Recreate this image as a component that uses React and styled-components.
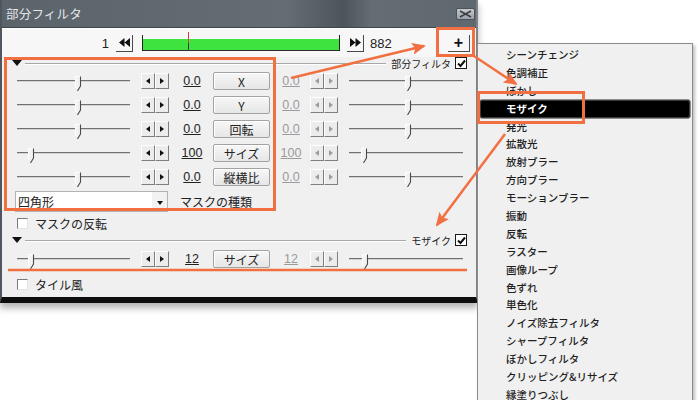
import React from 'react';
import styled, { createGlobalStyle } from 'styled-components';

const ORANGE = '#f26f42';
const JP = `"Noto Sans CJK JP", "Noto Sans", sans-serif`;
const NUM = `"Liberation Sans", "Noto Sans CJK JP", sans-serif`;

const Global = createGlobalStyle`
  html, body { margin: 0; padding: 0; background: #fff; }
  body { font-family: ${JP}; color: #1e1e1e; }
`;

const Stage = styled.div`
  position: relative;
  width: 700px;
  height: 400px;
  overflow: hidden;
  display: flex;
  align-items: flex-start;
  background: #fff;
`;

const Win = styled.div`
  position: relative;
  z-index: 1;
  flex: none;
  width: 478px;
  box-sizing: border-box;
  display: flex;
  flex-direction: column;
  background: #f0f0f0;
  border-left: 2px solid #4f565d;
  border-right: 2px solid #7d848b;
  border-bottom: 6px solid #0e0e0e;
  box-shadow: 0 5px 7px rgba(0, 0, 0, 0.3);
`;

const TitleBar = styled.div`
  height: 27px;
  display: flex;
  align-items: center;
  justify-content: space-between;
  padding: 0 1px 0 4px;
  background: linear-gradient(90deg, #5b636b 0%, #646c74 60%, #4d555c 72%, #646c74 78%, #5f676f 100%);
  border-bottom: 1px solid #3f454b;
`;

const Title = styled.span`
  font-size: 12.5px;
  color: #e3e7ea;
  letter-spacing: 0.2px;
`;

const CloseBtn = styled.div`
  width: 19px;
  height: 12px;
  box-sizing: border-box;
  border: 1px solid #4c535a;
  border-radius: 2px;
  background: linear-gradient(#c6cacd, #9aa0a5);
  display: flex;
  align-items: center;
  justify-content: center;
`;

const Client = styled.div`
  display: flex;
  flex-direction: column;
  border-top: 1px solid #fdfdfd;
`;

const TopRow = styled.div`
  height: 28px;
  display: flex;
  align-items: center;
  background: #f7f7f7;
`;

const FrameNum = styled.span`
  width: ${(p) => p.w}px;
  margin-left: ${(p) => p.ml || 0}px;
  text-align: ${(p) => p.align || 'left'};
  font-family: ${NUM};
  font-size: 13px;
  color: #222;
`;

const JumpBtn = styled.div`
  width: 17px;
  height: 17px;
  box-sizing: border-box;
  margin-left: ${(p) => p.ml}px;
  border-right: 1px solid #4a4a4a;
  border-bottom: 1px solid #4a4a4a;
  display: flex;
  align-items: center;
  justify-content: center;
`;

const Bar = styled.div`
  position: relative;
  width: 198px;
  height: 11px;
  margin-left: 9px;
  margin-top: 4px;
  background: #3fe33f;
  border-bottom: 1px solid #2c2c2c;
  &::before,
  &::after {
    content: '';
    position: absolute;
    top: -4px;
    bottom: -1px;
    width: 1px;
    background: #222;
  }
  &::before { left: 0; }
  &::after { right: 0; }
`;

const Marker = styled.div`
  position: absolute;
  left: 46px;
  top: -7px;
  width: 1px;
  height: 19px;
  background: linear-gradient(#e03c3c 0 58%, #3a3a3a 58% 100%);
`;

const PlusBtn = styled.div`
  width: 22px;
  height: 17px;
  box-sizing: border-box;
  margin-left: auto;
  margin-right: 6px;
  border-right: 1px solid #4a4a4a;
  border-bottom: 1px solid #4a4a4a;
  display: flex;
  align-items: center;
  justify-content: center;
  font-family: ${NUM};
  font-weight: 700;
  font-size: 16px;
  line-height: 1;
  color: #111;
`;

const SectionHeader = styled.div`
  height: ${(p) => p.h}px;
  display: flex;
  align-items: center;
  padding: 0 9px 0 10px;
`;

const Tri = styled.div`
  width: 0;
  height: 0;
  border-left: 5px solid transparent;
  border-right: 5px solid transparent;
  border-top: 6px solid #111;
`;

const Rule = styled.div`
  flex: 1;
  height: 1px;
  margin: 0 5px 0 3px;
  background: #a8a8a8;
  box-shadow: 0 1px 0 #fff;
`;

const SectionLabel = styled.span`
  font-size: 10px;
  color: #222;
  margin-right: 4px;
`;

const Row = styled.div`
  height: ${(p) => p.h || 24}px;
  display: flex;
  align-items: center;
  padding-left: ${(p) => p.pl ?? 15}px;
`;

const Track = styled.div`
  position: relative;
  flex: none;
  width: ${(p) => p.w}px;
  height: 24px;
  margin-left: ${(p) => p.ml || 0}px;
  &::before {
    content: '';
    position: absolute;
    left: 0;
    right: 0;
    top: 11px;
    height: 1px;
    background: #707070;
  }
  &::after {
    content: '';
    position: absolute;
    left: 0;
    right: 0;
    top: 12px;
    height: 1px;
    background: #d2d2d2;
  }
`;

const ThumbWrap = styled.div`
  position: absolute;
  z-index: 1;
  top: 7px;
  left: ${(p) => p.pos}px;
  width: 7px;
  height: 16px;
  display: flex;
`;

const Pair = styled.div`
  display: flex;
  flex: none;
  margin-left: ${(p) => p.ml || 0}px;
`;

const ArrowBtn = styled.div`
  width: 14px;
  height: 16px;
  box-sizing: border-box;
  border: 1px solid;
  border-color: #fff #7e7e7e #7e7e7e #fff;
  background: #ececec;
  display: flex;
  align-items: center;
  justify-content: center;
`;

const TriL = styled.div`
  width: 0;
  height: 0;
  border-top: 3.5px solid transparent;
  border-bottom: 3.5px solid transparent;
  border-right: 4px solid ${(p) => (p.dim ? '#9c9c9c' : '#111')};
`;

const TriR = styled.div`
  width: 0;
  height: 0;
  border-top: 3.5px solid transparent;
  border-bottom: 3.5px solid transparent;
  border-left: 4px solid ${(p) => (p.dim ? '#9c9c9c' : '#111')};
`;

const Value = styled.span`
  flex: none;
  width: ${(p) => p.w}px;
  margin-left: ${(p) => p.ml}px;
  text-align: center;
  font-family: ${NUM};
  font-size: 12.5px;
  text-decoration: underline;
  color: ${(p) => (p.dim ? '#9a9a9a' : '#222')};
`;

const LabelBtn = styled.div`
  flex: none;
  width: 57px;
  height: 18px;
  box-sizing: border-box;
  margin-left: 3px;
  border: 1px solid #a2a2a2;
  border-radius: 2px;
  background: linear-gradient(#f7f7f7, #e6e6e6);
  box-shadow: inset 1px 1px 0 #fff;
  display: flex;
  align-items: center;
  justify-content: center;
  font-size: 12px;
  color: #222;
  font-family: ${JP};
`;

const Select = styled.div`
  width: 153px;
  height: 21px;
  box-sizing: border-box;
  border: 1px solid #b3b3b3;
  background: #fff;
  display: flex;
  align-items: center;
  justify-content: space-between;
`;

const SelectText = styled.span`
  font-size: 12px;
  padding-left: 2px;
  color: #222;
`;

const SelectBtn = styled.div`
  width: 15px;
  height: 19px;
  background: #f2f2f2;
  display: flex;
  align-items: center;
  justify-content: center;
`;

const TriDown = styled.div`
  width: 0;
  height: 0;
  margin-top: 4px;
  border-left: 3.5px solid transparent;
  border-right: 3.5px solid transparent;
  border-top: 4px solid #111;
`;

const Text = styled.span`
  font-size: 12px;
  color: #222;
  margin-left: ${(p) => p.ml || 0}px;
`;

const Box = styled.div`
  flex: none;
  width: 11px;
  height: 11px;
  box-sizing: border-box;
  background: #fff;
  border: 1px solid;
  border-color: #7a7a7a #e4e4e4 #e4e4e4 #7a7a7a;
`;

const CheckedBox = styled.div`
  flex: none;
  width: 12px;
  height: 12px;
  box-sizing: border-box;
  background: #fff;
  border: 1.5px solid #1a1a1a;
  display: flex;
  align-items: center;
  justify-content: center;
`;

const Menu = styled.div`
  position: relative;
  z-index: 2;
  flex: none;
  width: 216px;
  height: 380px;
  margin-top: 43px;
  margin-left: -1px;
  box-sizing: border-box;
  padding: 2px 2px;
  background: #f0f0f0;
  border: 1px solid #8b8b8b;
  box-shadow: 2px 2px 3px rgba(0, 0, 0, 0.25);
`;

const MenuItem = styled.div`
  height: 17.9px;
  box-sizing: border-box;
  padding-left: 26px;
  font-size: 10.5px;
  line-height: 18px;
  color: ${(p) => (p.active ? '#fff' : '#1e1e1e')};
  font-weight: ${(p) => (p.active ? 700 : 500)};
  background: ${(p) => (p.active ? '#000' : 'transparent')};
  border-radius: ${(p) => (p.active ? '3px' : '0')};
  box-shadow: ${(p) => (p.active ? '0 0 0 1px #8c8c8c, inset 0 0 0 1px #3a3a3a' : 'none')};
`;

const Overlay = styled.svg`
  position: absolute;
  left: 0;
  top: 0;
  z-index: 5;
  pointer-events: none;
`;

function Thumb({ pos }) {
  return (
    <ThumbWrap pos={pos}>
      <svg width="7" height="16" viewBox="0 0 7 16">
        <polygon points="0.5,0.5 5.5,0.5 5.5,10 3,14.5 0.5,12" fill="#f2f2f2" />
        <path d="M0.5 12 V0.5 H5.5" stroke="#fff" fill="none" />
        <path d="M5.5 0.5 V10 L2.5 15" stroke="#4a4a4a" fill="none" strokeWidth="1.1" />
      </svg>
    </ThumbWrap>
  );
}

function Slider({ w, pos, ml }) {
  return (
    <Track w={w} ml={ml}>
      <Thumb pos={pos} />
    </Track>
  );
}

function Arrows({ dim, ml }) {
  return (
    <Pair ml={ml}>
      <ArrowBtn>
        <TriL dim={dim} />
      </ArrowBtn>
      <ArrowBtn>
        <TriR dim={dim} />
      </ArrowBtn>
    </Pair>
  );
}

function Check() {
  return (
    <CheckedBox>
      <svg width="9" height="9" viewBox="0 0 9 9">
        <path d="M1 4.5 L3.5 7 L8 1.5" stroke="#111" strokeWidth="2" fill="none" />
      </svg>
    </CheckedBox>
  );
}

function ParamRow({ v, label, lp, rp, h }) {
  return (
    <Row h={h}>
      <Slider w={113} pos={lp} />
      <Arrows ml={11} />
      <Value w={36} ml={5}>{v}</Value>
      <LabelBtn>{label}</LabelBtn>
      <Value w={38} ml={2} dim>{v}</Value>
      <Arrows dim />
      <Slider w={114} pos={rp} ml={11} />
    </Row>
  );
}

const params = [
  { v: '0.0', label: 'X', lp: 58, rp: 56 },
  { v: '0.0', label: 'Y', lp: 58, rp: 56 },
  { v: '0.0', label: '回転', lp: 58, rp: 56 },
  { v: '100', label: 'サイズ', lp: 11, rp: 12 },
  { v: '0.0', label: '縦横比', lp: 58, rp: 56 },
];

const menuItems = [
  'シーンチェンジ', '色調補正', 'ぼかし', 'モザイク', '発光', '拡散光', '放射ブラー', '方向ブラー',
  'モーションブラー', '振動', '反転', 'ラスター', '画像ループ', '色ずれ', '単色化', 'ノイズ除去フィルタ',
  'シャープフィルタ', 'ぼかしフィルタ', 'クリッピング&リサイズ', '縁塗りつぶし',
];

function Annotations() {
  return (
    <Overlay width="700" height="400" viewBox="0 0 700 400">
      <defs>
        <marker id="ah" markerUnits="userSpaceOnUse" markerWidth="14" markerHeight="12" refX="12" refY="6" orient="auto">
          <path d="M0 0 L14 6 L0 12 L3 6 z" fill={ORANGE} />
        </marker>
      </defs>
      <g fill="none" stroke={ORANGE} strokeWidth="3">
        <rect x="5.5" y="58.5" width="269" height="151" />
        <rect x="437.5" y="28.5" width="36" height="27" />
        <rect x="478.5" y="92.5" width="105" height="30" />
      </g>
      <line x1="8" y1="270" x2="467" y2="270" stroke={ORANGE} strokeWidth="2.5" />
      <g stroke={ORANGE} strokeWidth="2.5" markerEnd="url(#ah)">
        <line x1="291" y1="78" x2="424" y2="46" />
        <line x1="474" y1="56" x2="516" y2="84" />
        <line x1="505" y1="134" x2="437" y2="225" />
      </g>
    </Overlay>
  );
}

export default function App() {
  return (
    <>
      <Global />
      <Stage>
        <Win>
          <TitleBar>
            <Title>部分フィルタ</Title>
            <CloseBtn>
              <svg width="13" height="8" viewBox="0 0 13 8">
                <path d="M1 1 L12 7 M12 1 L1 7" stroke="#3a3f44" strokeWidth="1.6" />
              </svg>
            </CloseBtn>
          </TitleBar>
          <Client>
            <TopRow>
              <FrameNum w={107} align="right">1</FrameNum>
              <JumpBtn ml={7}>
                <svg width="11" height="9" viewBox="0 0 11 9">
                  <path d="M5.5 0 V9 L0 4.5 z M11 0 V9 L5.5 4.5 z" fill="#111" />
                </svg>
              </JumpBtn>
              <Bar>
                <Marker />
              </Bar>
              <JumpBtn ml={7}>
                <svg width="11" height="9" viewBox="0 0 11 9">
                  <path d="M0 0 V9 L5.5 4.5 z M5.5 0 V9 L11 4.5 z" fill="#111" />
                </svg>
              </JumpBtn>
              <FrameNum w={30} ml={6}>882</FrameNum>
              <PlusBtn>+</PlusBtn>
            </TopRow>
            <SectionHeader h={12}>
              <Tri />
              <Rule />
              <SectionLabel>部分フィルタ</SectionLabel>
              <Check />
            </SectionHeader>
            {params.map((p) => (
              <ParamRow key={p.label} {...p} />
            ))}
            <Row pl={13}>
              <Select>
                <SelectText>四角形</SelectText>
                <SelectBtn>
                  <TriDown />
                </SelectBtn>
              </Select>
              <Text ml={12}>マスクの種類</Text>
            </Row>
            <Row h={20}>
              <Box />
              <Text ml={7}>マスクの反転</Text>
            </Row>
            <SectionHeader h={14}>
              <Tri />
              <Rule />
              <SectionLabel>モザイク</SectionLabel>
              <Check />
            </SectionHeader>
            <ParamRow v="12" label="サイズ" lp={11} rp={13} />
            <Row h={26}>
              <Box />
              <Text ml={7}>タイル風</Text>
            </Row>
          </Client>
        </Win>
        <Menu>
          {menuItems.map((m) => (
            <MenuItem key={m} active={m === 'モザイク'}>
              {m}
            </MenuItem>
          ))}
        </Menu>
        <Annotations />
      </Stage>
    </>
  );
}
